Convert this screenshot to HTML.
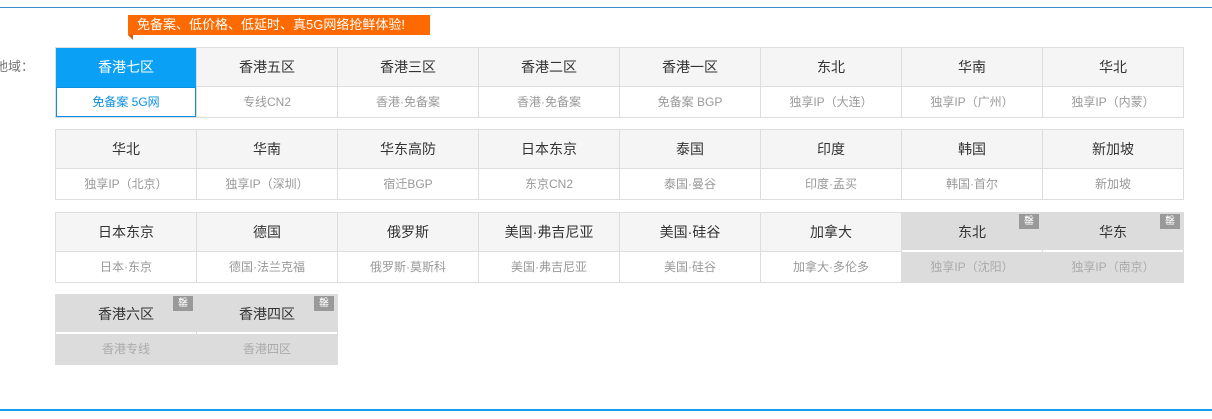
<!DOCTYPE html>
<html><head><meta charset="utf-8"><style>
body{margin:0;width:1212px;height:419px;background:#fff;font-family:"Liberation Sans","Noto Sans CJK SC",sans-serif;position:relative;overflow:hidden}
.top{position:absolute;left:0;top:7px;width:1212px;height:1px;background:#3a8fd0}
.bot{position:absolute;left:0;top:409px;width:1212px;height:2px;background:#10a0f0}
.promo{position:absolute;left:128px;top:15px;width:302px;height:20px;background:#ff6a00;color:#fff;font-size:13px;line-height:20px;padding-left:9px;box-sizing:border-box}
.promo:after{content:"";position:absolute;left:0;top:20px;border-top:5px solid #e06000;border-left:5px solid transparent}
.lbl{position:absolute;left:-5px;top:56px;font-size:13px;color:#777}
.row{position:absolute;left:55px;display:flex;border:1px solid #ddd;border-right:none}
.c{width:140px;border-right:1px solid #ddd;position:relative}
.c .h{height:38px;line-height:38px;text-align:center;font-size:14px;color:#333;background:#f5f5f5;border-bottom:1px solid #ddd}
.c .s{height:30px;line-height:30px;text-align:center;font-size:12px;color:#999;background:#fff}
.c.a .h{background:#0aa0f5;color:#fff;border-bottom-color:#0aa0f5}
.c.a .s{color:#0a90e0;outline:1px solid #0a90e0;outline-offset:-1px}
.c.x{border-right-color:#dcdcdc}
.c.x .h,.c.x .s{background:#dcdcdc;color:#999}
.c.x .h{color:#333;border-bottom:2px solid #fff;height:37px}
.c.x .s{color:#aaa}
.b{position:absolute;right:3px;top:1px;width:20px;height:15px;background:#999;color:#fff;font-size:10px;line-height:15px;text-align:center}
</style></head><body>
<div class="top"></div>
<div class="promo">免备案、低价格、低延时、真5G网络抢鲜体验!</div>
<div class="lbl">地域：</div>
<div class="row" style="top:47px">
<div class="c a"><div class="h">香港七区</div><div class="s">免备案 5G网</div></div>
<div class="c"><div class="h">香港五区</div><div class="s">专线CN2</div></div>
<div class="c"><div class="h">香港三区</div><div class="s">香港·免备案</div></div>
<div class="c"><div class="h">香港二区</div><div class="s">香港·免备案</div></div>
<div class="c"><div class="h">香港一区</div><div class="s">免备案 BGP</div></div>
<div class="c"><div class="h">东北</div><div class="s">独享IP（大连）</div></div>
<div class="c"><div class="h">华南</div><div class="s">独享IP（广州）</div></div>
<div class="c"><div class="h">华北</div><div class="s">独享IP（内蒙）</div></div>
</div>
<div class="row" style="top:129px">
<div class="c"><div class="h">华北</div><div class="s">独享IP（北京）</div></div>
<div class="c"><div class="h">华南</div><div class="s">独享IP（深圳）</div></div>
<div class="c"><div class="h">华东高防</div><div class="s">宿迁BGP</div></div>
<div class="c"><div class="h">日本东京</div><div class="s">东京CN2</div></div>
<div class="c"><div class="h">泰国</div><div class="s">泰国·曼谷</div></div>
<div class="c"><div class="h">印度</div><div class="s">印度·孟买</div></div>
<div class="c"><div class="h">韩国</div><div class="s">韩国·首尔</div></div>
<div class="c"><div class="h">新加坡</div><div class="s">新加坡</div></div>
</div>
<div class="row" style="top:212px">
<div class="c"><div class="h">日本东京</div><div class="s">日本·东京</div></div>
<div class="c"><div class="h">德国</div><div class="s">德国·法兰克福</div></div>
<div class="c"><div class="h">俄罗斯</div><div class="s">俄罗斯·莫斯科</div></div>
<div class="c"><div class="h">美国·弗吉尼亚</div><div class="s">美国·弗吉尼亚</div></div>
<div class="c"><div class="h">美国·硅谷</div><div class="s">美国·硅谷</div></div>
<div class="c"><div class="h">加拿大</div><div class="s">加拿大·多伦多</div></div>
<div class="c x"><div class="b">罄</div><div class="h">东北</div><div class="s">独享IP（沈阳）</div></div>
<div class="c x"><div class="b">罄</div><div class="h">华东</div><div class="s">独享IP（南京）</div></div>
</div>
<div class="row" style="top:294px;border-color:#dcdcdc">
<div class="c x"><div class="b">罄</div><div class="h">香港六区</div><div class="s">香港专线</div></div>
<div class="c x"><div class="b">罄</div><div class="h">香港四区</div><div class="s">香港四区</div></div>
</div>
<div class="bot"></div>
</body></html>
